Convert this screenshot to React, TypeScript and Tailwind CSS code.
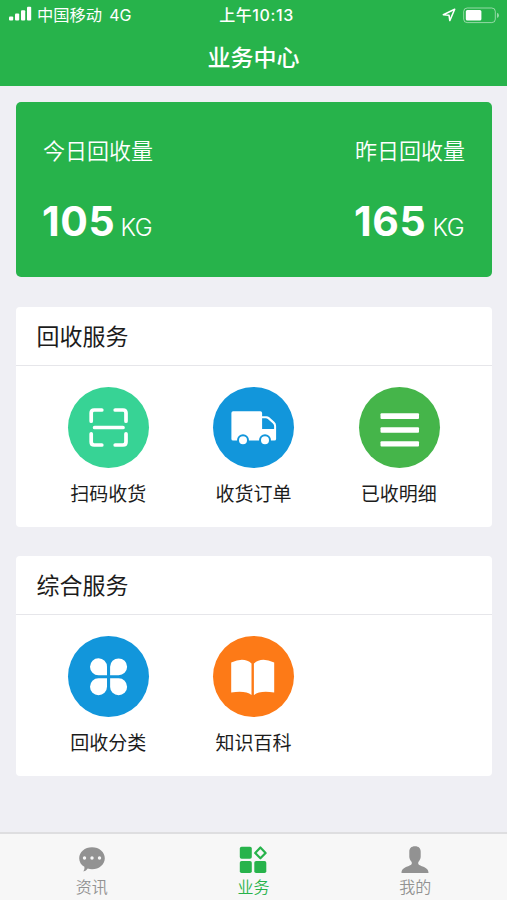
import type { ReactNode } from 'react'

type Service = { label: string; color: string; icon: ReactNode }

function ScanIcon() {
  return (
    <svg className="w-full h-full" viewBox="0 0 81 81" fill="none" stroke="#fff" strokeWidth="3.7" strokeLinecap="round" strokeLinejoin="round">
      <path d="M23.2 34.2V26q0-3 3-3h7.6M47.2 23H55q3 0 3 3v8.2M23.2 46.8V55q0 3 3 3h7.6M47.2 58H55q3 0 3-3v-8.2M26.6 40.5H55" />
    </svg>
  )
}

function TruckIcon() {
  return (
    <svg className="w-full h-full" viewBox="0 0 81 81">
      <path
        fill="#fff"
        fillRule="evenodd"
        d="M20.1 24.2h27.300q1.700 0 1.700 1.700v3.400h4.400q1.600 0 2.800 1l5 4.400q1.800 1.600 1.800 4v13.200q0 1.700-1.700 1.700H20.100q-1.700 0-1.700-1.700V25.900q0-1.700 1.700-1.700zM49.100 31.200v10.800h12v-3q0-1.500-1.200-2.500l-4.800-4.300q-1-1-2.500-1z"
      />
      <circle cx="30" cy="53.2" r="5" fill="#fff" stroke="#1296db" strokeWidth="2" />
      <circle cx="52" cy="53.2" r="5" fill="#fff" stroke="#1296db" strokeWidth="2" />
    </svg>
  )
}

function ListIcon() {
  return (
    <svg className="w-full h-full" viewBox="0 0 81 81" fill="#fff">
      <rect x="21.5" y="26.3" width="38.5" height="5.6" rx="1" />
      <rect x="21.5" y="40.2" width="38.5" height="5.6" rx="1" />
      <rect x="21.5" y="54.3" width="38.5" height="5.2" rx="1" />
    </svg>
  )
}

function CloverIcon() {
  return (
    <svg className="w-full h-full" viewBox="0 0 81 81" fill="#fff">
      <path d="M39 39.2h-8.5A8.5 8.5 0 1 1 39 30.8z" />
      <path d="M42.1 39.2V30.8a8.5 8.4 0 1 1 8.5 8.4z" />
      <path d="M39 42.3v8.5a8.5 8.5 0 1 1-8.5-8.5z" />
      <path d="M42.1 42.3h8.5a8.5 8.5 0 1 1-8.5 8.5z" />
    </svg>
  )
}

function BookIcon() {
  return (
    <svg className="w-full h-full" viewBox="0 0 81 81" fill="#fff">
      <path d="M18.2 26.4Q31.5 20.8 38.5 27.6V59q-6-4.800-20.300-2.500z" />
      <path d="M61.200 26.400Q47.900 20.800 40.900 27.600V59q6-4.800 20.300-2.500z" />
    </svg>
  )
}

const recycleServices: Service[] = [
  { label: '扫码收货', color: 'bg-[#37d395]', icon: <ScanIcon /> },
  { label: '收货订单', color: 'bg-[#1296db]', icon: <TruckIcon /> },
  { label: '已收明细', color: 'bg-[#45b54a]', icon: <ListIcon /> },
]

const generalServices: Service[] = [
  { label: '回收分类', color: 'bg-[#1296db]', icon: <CloverIcon /> },
  { label: '知识百科', color: 'bg-[#fd7a17]', icon: <BookIcon /> },
]

function StatusBar() {
  return (
    <div className="grid grid-cols-3 items-center h-[30px] pl-[9px] pr-[7px] text-[16px] leading-none">
      <div className="flex items-center">
        <svg className="-mt-px" width="23" height="16" viewBox="0 0 23 16" fill="#fff">
          <rect x="0" y="10.5" width="4.2" height="4" rx="1" />
          <rect x="6" y="7.5" width="4.2" height="7" rx="1" />
          <rect x="12" y="4.3" width="4.2" height="10.2" rx="1" />
          <rect x="18" y="0.8" width="4.2" height="13.7" rx="1" />
        </svg>
        <span className="ml-[5px] text-[16.3px]">中国移动</span>
        <span className="ml-[7px]">4G</span>
      </div>
      <div className="text-center pl-[4px] font-medium tracking-[0.6px] whitespace-nowrap">上午10:13</div>
      <div className="flex items-center justify-end">
        <svg width="14" height="14" viewBox="0 0 14 14" fill="none" stroke="#fff" strokeWidth="1.5" strokeLinejoin="round">
          <path d="M12.7 1.2 1.3 6.7l5.700.500.800 5.400z" />
        </svg>
        <svg className="ml-[7px]" width="37" height="17" viewBox="0 0 37 17">
          <rect x="0.7" y="1" width="31.600" height="14.600" rx="3.500" fill="none" stroke="#fff" strokeOpacity=".5" />
          <rect x="2.800" y="3" width="15.600" height="10.600" rx="1.500" fill="#fff" />
          <path d="M34 5.800q2 .9 2 2.600T34 11z" fill="#fff" fillOpacity=".5" />
        </svg>
      </div>
    </div>
  )
}

function Amount({ label, value }: { label: string; value: number }) {
  return (
    <div>
      <p className="text-[22px] leading-[32px] font-[350]">{label}</p>
      <p className="mt-[32px] -ml-px flex items-baseline justify-between leading-[44px]">
        <span className="text-[41px] font-bold tracking-[0.6px]">{value}</span>
        <span className="mr-[1px] text-[24px] font-light tracking-[-0.5px]">KG</span>
      </p>
    </div>
  )
}

function ServicePanel({ title, services }: { title: string; services: Service[] }) {
  return (
    <section className="h-[219.5px] bg-white rounded-[4px] text-[#1c1c1c]">
      <h2 className="h-[59px] flex items-center pl-[20.5px] pt-[3px] text-[23px] border-b border-[#e6e6ea]">{title}</h2>
      <div className="grid grid-cols-3 px-5 pt-[20.5px]">
        {services.map((s) => (
          <div key={s.label} className="flex flex-col items-center">
            <div className={`size-[81px] rounded-full ${s.color}`}>{s.icon}</div>
            <p className="mt-[13px] -ml-px text-[19px] leading-[28px]">{s.label}</p>
          </div>
        ))}
      </div>
    </section>
  )
}

function TabBar() {
  return (
    <nav className="h-[68px] grid grid-cols-3 px-[11px] bg-[#f7f7f7] border-t-2 border-[#dedee0] text-[16px] leading-[24px] text-[#929292] font-[350]">
      <div className="flex flex-col items-center pt-[11px]">
        <svg width="28" height="28" viewBox="0 0 28 28">
          <path fill="#929292" d="M14 2.200c7.200 0 12.800 4.900 12.800 11S21.200 24.200 14 24.200q-2.300 0-4.300-.6Q8.300 26 5.400 26.400q1.500-2 1-4.600C3 19.800 1.200 16.800 1.200 13.200c0-6.100 5.600-11 12.800-11z" />
          <g fill="#f7f7f7">
            <circle cx="6.5" cy="13" r="1.7" />
            <circle cx="14" cy="13" r="1.7" />
            <circle cx="21.5" cy="13" r="1.7" />
          </g>
        </svg>
        <span className="mt-[2px]">资讯</span>
      </div>
      <div className="flex flex-col items-center pt-[11px] text-[#27b34b]">
        <svg width="28" height="28" viewBox="0 0 28 28" fill="currentColor">
          <rect x="0.8" y="1.8" width="12" height="12" rx="1.8" />
          <rect x="0.8" y="16" width="12" height="12" rx="1.8" />
          <rect x="15.3" y="16" width="12" height="12" rx="1.8" />
          <path d="M21.400 2.500l5.200 5.400-5.200 5.400L16.200 7.900z" fill="none" stroke="currentColor" strokeWidth="2.200" strokeLinejoin="round" />
        </svg>
        <span className="mt-[2px]">业务</span>
      </div>
      <div className="flex flex-col items-center pt-[11px]">
        <svg width="28" height="28" viewBox="0 0 28 28" fill="#929292">
          <path d="M14 1.300c3.800 0 5.700 2.200 5.700 5.400v5c0 1.800-.9 3.500-2 4.700-.5.600-.6 1.200-.5 2.200.2 1.300 1.200 1.700 3 2.300 4 1.300 7.300 2.700 7.300 7.100H.5c0-4.400 3.300-5.800 7.300-7.100 1.800-.6 2.800-1 3-2.300.1-1 0-1.600-.5-2.200-1.100-1.200-2-2.900-2-4.700v-5c0-3.200 1.900-5.400 5.700-5.400z" />
        </svg>
        <span className="mt-[2px]">我的</span>
      </div>
    </nav>
  )
}

export default function App() {
  return (
    <div className="w-[507px] h-[900px] flex flex-col overflow-hidden bg-[#efeff4] font-['Inter','Noto_Sans_CJK_SC',sans-serif]">
      <header className="h-[86px] bg-[#27b34b] text-white">
        <StatusBar />
        <h1 className="pt-[11px] text-center text-[23px] leading-[34px] font-medium">业务中心</h1>
      </header>
      <main className="flex-1 pl-[16px] pt-[16px] pr-[15px]">
        <div className="h-[175px] flex justify-between px-[27px] pt-[33px] rounded-[5px] bg-[#27b34b] text-white">
          <Amount label="今日回收量" value={105} />
          <Amount label="昨日回收量" value={165} />
        </div>
        <div className="mt-[30px] space-y-[29.5px]">
          <ServicePanel title="回收服务" services={recycleServices} />
          <ServicePanel title="综合服务" services={generalServices} />
        </div>
      </main>
      <TabBar />
    </div>
  )
}
